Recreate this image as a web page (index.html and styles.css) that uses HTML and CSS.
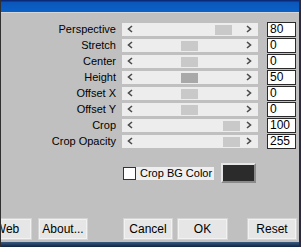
FILE: index.html
```html
<!DOCTYPE html>
<html lang="en">
<head>
    <meta charset="UTF-8">
    <title>Perspective</title>
    <link rel="stylesheet" href="styles.css">
</head>
<body>
    <div class="window">
        <div class="titlebar"></div>
        <div class="content">
            <div class="rows">
                <div class="row">
                    <span class="label">Perspective</span>
                    <div class="track">
                        <svg class="arrow" width="6" height="8" viewBox="0 0 6 8"><path d="M5 1 L1.5 4 L5 7" /></svg>
                        <span class="thumb" style="left: 93px"></span>
                        <svg class="arrow" width="6" height="8" viewBox="0 0 6 8"><path d="M1 1 L4.5 4 L1 7" /></svg>
                    </div>
                    <div class="value">80</div>
                </div>
                <div class="row">
                    <span class="label">Stretch</span>
                    <div class="track">
                        <svg class="arrow" width="6" height="8" viewBox="0 0 6 8"><path d="M5 1 L1.5 4 L5 7" /></svg>
                        <span class="thumb" style="left: 59px"></span>
                        <svg class="arrow" width="6" height="8" viewBox="0 0 6 8"><path d="M1 1 L4.5 4 L1 7" /></svg>
                    </div>
                    <div class="value">0</div>
                </div>
                <div class="row">
                    <span class="label">Center</span>
                    <div class="track">
                        <svg class="arrow" width="6" height="8" viewBox="0 0 6 8"><path d="M5 1 L1.5 4 L5 7" /></svg>
                        <span class="thumb" style="left: 59px"></span>
                        <svg class="arrow" width="6" height="8" viewBox="0 0 6 8"><path d="M1 1 L4.5 4 L1 7" /></svg>
                    </div>
                    <div class="value">0</div>
                </div>
                <div class="row">
                    <span class="label">Height</span>
                    <div class="track">
                        <svg class="arrow" width="6" height="8" viewBox="0 0 6 8"><path d="M5 1 L1.5 4 L5 7" /></svg>
                        <span class="thumb active" style="left: 59px"></span>
                        <svg class="arrow" width="6" height="8" viewBox="0 0 6 8"><path d="M1 1 L4.5 4 L1 7" /></svg>
                    </div>
                    <div class="value">50</div>
                </div>
                <div class="row">
                    <span class="label">Offset X</span>
                    <div class="track">
                        <svg class="arrow" width="6" height="8" viewBox="0 0 6 8"><path d="M5 1 L1.5 4 L5 7" /></svg>
                        <span class="thumb" style="left: 59px"></span>
                        <svg class="arrow" width="6" height="8" viewBox="0 0 6 8"><path d="M1 1 L4.5 4 L1 7" /></svg>
                    </div>
                    <div class="value">0</div>
                </div>
                <div class="row">
                    <span class="label">Offset Y</span>
                    <div class="track">
                        <svg class="arrow" width="6" height="8" viewBox="0 0 6 8"><path d="M5 1 L1.5 4 L5 7" /></svg>
                        <span class="thumb" style="left: 59px"></span>
                        <svg class="arrow" width="6" height="8" viewBox="0 0 6 8"><path d="M1 1 L4.5 4 L1 7" /></svg>
                    </div>
                    <div class="value">0</div>
                </div>
                <div class="row">
                    <span class="label">Crop</span>
                    <div class="track">
                        <svg class="arrow" width="6" height="8" viewBox="0 0 6 8"><path d="M5 1 L1.5 4 L5 7" /></svg>
                        <span class="thumb" style="left: 101px"></span>
                        <svg class="arrow" width="6" height="8" viewBox="0 0 6 8"><path d="M1 1 L4.5 4 L1 7" /></svg>
                    </div>
                    <div class="value">100</div>
                </div>
                <div class="row">
                    <span class="label">Crop Opacity</span>
                    <div class="track">
                        <svg class="arrow" width="6" height="8" viewBox="0 0 6 8"><path d="M5 1 L1.5 4 L5 7" /></svg>
                        <span class="thumb" style="left: 101px"></span>
                        <svg class="arrow" width="6" height="8" viewBox="0 0 6 8"><path d="M1 1 L4.5 4 L1 7" /></svg>
                    </div>
                    <div class="value">255</div>
                </div>
            </div>

            <div class="bg-row">
                <span class="checkbox"></span>
                <span class="check-label">Crop BG Color</span>
                <span class="swatch"></span>
            </div>

            <div class="buttons">
                <button class="btn btn-web">Web</button>
                <button class="btn btn-about">About...</button>
                <button class="btn btn-cancel">Cancel</button>
                <button class="btn btn-ok">OK</button>
                <button class="btn btn-reset">Reset</button>
            </div>
        </div>
        <div class="bottombar"></div>
    </div>
</body>
</html>
```

FILE: styles.css
```css
body {
    margin: 0;
    font-family: "Liberation Sans", Arial, sans-serif;
    font-size: 11px;
    color: #000;
    background-color: #c0c0c0;
}
.window {
    width: 301px;
    height: 247px;
    box-sizing: border-box;
    border-left: 1px solid #303030;
    border-right: 2px solid #2a2a3a;
    background-color: #c0c0c0;
    display: flex;
    flex-direction: column;
    overflow: hidden;
}
.titlebar {
    height: 12px;
    flex-shrink: 0;
    background: linear-gradient(to bottom, #0a2a78 0, #0a2a78 1px, #0b55b8 2px, #0a62c8 12px);
    border-bottom: 1px solid #d6d6d6;
}
.content {
    flex: 1;
    display: flex;
    flex-direction: column;
    padding-top: 8px;
}
.rows {
    display: flex;
    flex-direction: column;
}
.row {
    display: flex;
    align-items: center;
    height: 16px;
}
.label {
    width: 115px;
    text-align: right;
    white-space: nowrap;
}
.track {
    position: relative;
    margin-left: 6px;
    width: 136px;
    height: 13px;
    background-color: #ededed;
    display: flex;
    align-items: center;
    justify-content: space-between;
    padding: 0 6px 0 5px;
    box-sizing: border-box;
}
.arrow path {
    fill: none;
    stroke: #4a4a4a;
    stroke-width: 1.6;
}
.thumb {
    position: absolute;
    top: 2px;
    width: 17px;
    height: 10px;
    background-color: #c9c9c9;
}
.thumb.active {
    background-color: #a9a9a9;
}
.value {
    margin-left: 9px;
    width: 29px;
    height: 15px;
    box-sizing: border-box;
    border: 1px solid #2a2a2a;
    background-color: #fff;
    font-size: 12px;
    line-height: 13px;
    padding-left: 2px;
}
.bg-row {
    display: flex;
    align-items: center;
    margin-top: 14px;
    padding-left: 122px;
    height: 20px;
}
.checkbox {
    width: 13px;
    height: 13px;
    box-sizing: border-box;
    border: 1px solid #333;
    background-color: #fff;
}
.check-label {
    width: 78px;
    height: 13px;
    line-height: 13px;
    background-color: #efefef;
    padding-left: 4px;
    box-sizing: border-box;
    font-size: 11px;
}
.swatch {
    margin-left: 7px;
    width: 35px;
    height: 20px;
    box-sizing: border-box;
    border: 2px solid #e6e6e6;
    border-right-color: #8a8a8a;
    border-bottom-color: #8a8a8a;
    background-color: #2b2b2b;
}
.buttons {
    display: flex;
    margin-top: 35px;
}
.btn {
    height: 22px;
    width: 50px;
    flex-shrink: 0;
    padding: 0;
    font-family: "Liberation Sans", Arial, sans-serif;
    font-size: 12px;
    color: #000;
    background-color: #e6e6e6;
    border: 1px solid #d4d4d4;
    box-shadow: inset 0 0 0 1px #f2f2f2;
}
.btn-web {
    margin-left: -19px;
}
.btn-about {
    margin-left: 6px;
}
.btn-cancel {
    margin-left: 35px;
}
.btn-ok {
    margin-left: 4px;
    width: 51px;
}
.btn-reset {
    margin-left: 19px;
}
.bottombar {
    height: 5px;
    flex-shrink: 0;
    background: linear-gradient(to bottom, #3a5a80, #0e2444);
}
```
